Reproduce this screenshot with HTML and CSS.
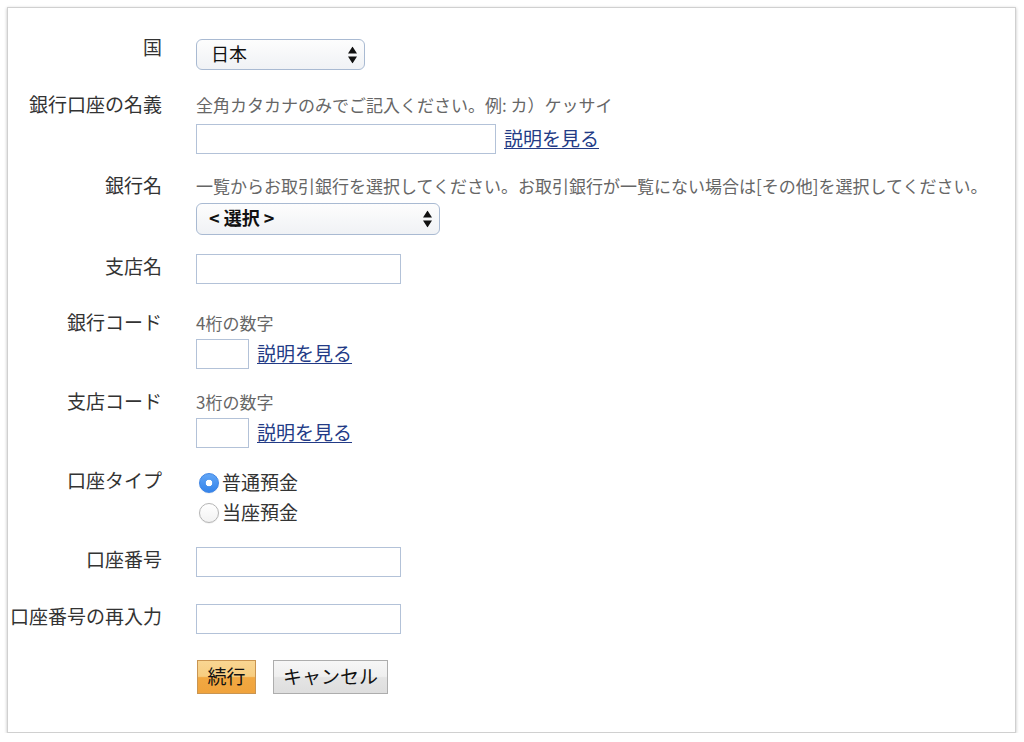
FILE: index.html
```html
<!DOCTYPE html>
<html lang="ja">
<head>
<meta charset="utf-8">
<title>銀行口座</title>
<link rel="stylesheet" href="styles.css">
</head>
<body>
<div class="card">
  <form class="form">
    <div class="row row-country">
      <div class="label">国</div>
      <div class="field">
        <div class="select-wrap select-country">
          <select class="select"><option>日本</option></select>
          <svg class="arrows" width="9" height="17" viewBox="0 0 9 17"><path d="M0 7 L4.5 0 L9 7 Z M0 10 L4.5 17 L9 10 Z" fill="#111"/></svg>
        </div>
      </div>
    </div>

    <div class="row row-holder">
      <div class="label">銀行口座の名義</div>
      <div class="field">
        <div class="hint">全角カタカナのみでご記入ください。例: カ）ケッサイ</div>
        <div class="line line-after-hint">
          <input class="input input-wide" type="text">
          <a class="link" href="#">説明を見る</a>
        </div>
      </div>
    </div>

    <div class="row row-bank">
      <div class="label">銀行名</div>
      <div class="field">
        <div class="hint">一覧からお取引銀行を選択してください。お取引銀行が一覧にない場合は[その他]を選択してください。</div>
        <div class="select-wrap select-bank">
          <select class="select select-bold"><option>&lt; 選択 &gt;</option></select>
          <svg class="arrows" width="9" height="17" viewBox="0 0 9 17"><path d="M0 7 L4.5 0 L9 7 Z M0 10 L4.5 17 L9 10 Z" fill="#111"/></svg>
        </div>
      </div>
    </div>

    <div class="row row-branch">
      <div class="label label-input">支店名</div>
      <div class="field">
        <input class="input input-mid" type="text">
      </div>
    </div>

    <div class="row row-bankcode">
      <div class="label">銀行コード</div>
      <div class="field">
        <div class="hint">4桁の数字</div>
        <div class="line line-code">
          <input class="input input-short" type="text">
          <a class="link" href="#">説明を見る</a>
        </div>
      </div>
    </div>

    <div class="row row-branchcode">
      <div class="label">支店コード</div>
      <div class="field">
        <div class="hint">3桁の数字</div>
        <div class="line line-code">
          <input class="input input-short" type="text">
          <a class="link" href="#">説明を見る</a>
        </div>
      </div>
    </div>

    <div class="row row-type">
      <div class="label label-radio">口座タイプ</div>
      <div class="field">
        <label class="radio-option"><input class="radio" type="radio" name="type" checked><span class="radio-text">普通預金</span></label>
        <label class="radio-option"><input class="radio" type="radio" name="type"><span class="radio-text">当座預金</span></label>
      </div>
    </div>

    <div class="row row-number">
      <div class="label label-input">口座番号</div>
      <div class="field">
        <input class="input input-mid" type="text">
      </div>
    </div>

    <div class="row row-confirm">
      <div class="label label-input">口座番号の再入力</div>
      <div class="field">
        <input class="input input-mid" type="text">
      </div>
    </div>

    <div class="row row-buttons">
      <div></div>
      <div class="buttons">
        <button class="btn btn-primary" type="button">続行</button>
        <button class="btn btn-cancel" type="button">キャンセル</button>
      </div>
    </div>
  </form>
</div>
</body>
</html>
```

FILE: styles.css
```css
* { box-sizing: border-box; }

body {
  margin: 0;
  background: #fff;
  font-family: "Noto Sans CJK JP", "Noto Sans", sans-serif;
  color: #333;
}

.card {
  margin: 7px 0 0 7px;
  width: 1009px;
  height: 726px;
  background: #fff;
  border: 1px solid #d0d0d0;
  box-shadow: 0 1px 3px rgba(0, 0, 0, 0.25);
  padding-top: 30px;
}

.form {
  display: flex;
  flex-direction: column;
}

.row {
  display: grid;
  grid-template-columns: 154px 1fr;
  column-gap: 34px;
}

.row-holder { margin-top: 25px; }
.row-bank { margin-top: 22px; }
.row-branch { margin-top: 19px; }
.row-bankcode { margin-top: 29px; }
.row-branchcode { margin-top: 23px; }
.row-type { margin-top: 20px; }
.row-number { margin-top: 19px; }
.row-confirm { margin-top: 27px; }
.row-buttons { margin-top: 26px; }

.label {
  font-size: 19px;
  line-height: 22px;
  text-align: right;
  color: #333;
  white-space: nowrap;
  margin-top: -2px;
}

.label-input { padding-top: 3px; }
.label-radio { padding-top: 3px; }

.field {
  display: flex;
  flex-direction: column;
  align-items: flex-start;
}

.hint {
  font-size: 17px;
  line-height: 22px;
  color: #666;
  white-space: nowrap;
  margin-top: -1px;
  margin-bottom: 1px;
}

.line {
  display: flex;
  align-items: center;
  gap: 8px;
}

.line-after-hint { margin-top: 7px; }
.line-code { margin-top: 4px; }

.input {
  height: 30px;
  border: 1px solid #b3c2d8;
  background: #fff;
  padding: 0 4px;
  font-family: inherit;
  font-size: 16px;
  outline: none;
}

.input-wide { width: 300px; }
.input-mid { width: 205px; }
.input-short { width: 53px; }

.link {
  font-size: 19px;
  line-height: 22px;
  padding-bottom: 3px;
  color: #233b86;
  text-decoration: underline;
  text-underline-offset: 2px;
}

.select-wrap {
  position: relative;
}

.select-country {
  width: 169px;
  height: 31px;
  margin-top: 1px;
}

.select-bank {
  width: 244px;
  height: 32px;
  margin-top: 5px;
}

.select {
  -webkit-appearance: none;
  appearance: none;
  width: 100%;
  height: 100%;
  border: 1px solid #a9bad2;
  border-radius: 6px;
  background: linear-gradient(#fdfdfd, #f0f2f5);
  font-family: inherit;
  font-size: 18px;
  color: #111;
  padding: 0 0 4px 14px;
  outline: none;
}

.select-bold {
  font-weight: bold;
  padding-left: 12px;
}

.arrows {
  position: absolute;
  right: 8px;
  top: 50%;
  transform: translateY(-50%);
}

.radio-option {
  height: 30px;
  display: flex;
  align-items: center;
  font-size: 19px;
  color: #333;
}

.radio-text {
  padding-bottom: 3px;
}

.radio {
  -webkit-appearance: none;
  appearance: none;
  width: 20px;
  height: 20px;
  margin: 0 3px 0 3px;
  border-radius: 50%;
  border: 1px solid #b5b5b5;
  background: linear-gradient(#ffffff, #f2f2f2);
  box-shadow: 0 0.5px 1px rgba(0, 0, 0, 0.1);
}

.radio:checked {
  border-color: #3c84e6;
  background:
    radial-gradient(circle, #fff 0 3px, transparent 3.6px),
    linear-gradient(#62a6f6, #3584ea);
}

.buttons {
  display: flex;
  gap: 17px;
  padding-left: 1px;
}

.btn {
  height: 34px;
  padding: 0 0 3px 0;
  font-family: inherit;
  font-size: 19px;
  color: #111;
  border: 1px solid;
  border-radius: 0;
}

.btn-primary {
  width: 59px;
  background: linear-gradient(#f9d692 0%, #f7cd80 48%, #f1a842 52%, #f0a33c 100%);
  border-color: #c99552;
}

.btn-cancel {
  width: 115px;
  background: linear-gradient(#f6f6f6 0%, #efefef 48%, #e4e4e4 52%, #dedede 100%);
  border-color: #adadad;
}
```
